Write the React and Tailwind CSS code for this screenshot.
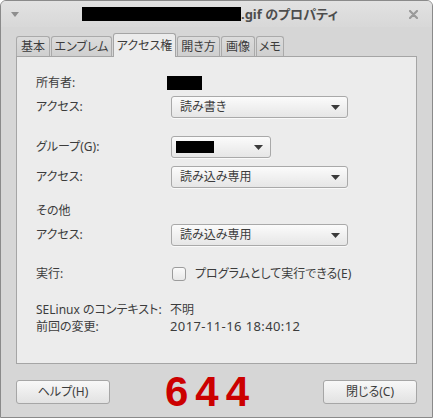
import React from "react";

const tabs = [
  { label: "基本", w: "w-[34px]" },
  { label: "エンブレム", w: "w-[61px]" },
  { label: "アクセス権", w: "w-[63px]", active: true },
  { label: "開き方", w: "w-[43px]" },
  { label: "画像", w: "w-[34px]" },
  { label: "メモ", w: "w-[28px]" },
];

const Caret = () => (
  <svg width="9" height="5" viewBox="0 0 9 5" className="shrink-0">
    <path d="M0 0 L9 0 L4.5 5 Z" fill="#3a3a3a" />
  </svg>
);

const Dropdown = ({ children, wide = true }) => (
  <div
    className={`${wide ? "w-[177px]" : "w-[100px]"} h-[22px] flex items-center justify-between pl-[8px] pr-[7px] rounded-[3px] border border-[#a9a9a9] bg-gradient-to-b from-[#fbfbfb] to-[#e6e6e6] shadow-[0_1px_0_rgba(255,255,255,0.7)] text-[12px] text-[#3c3c3c] whitespace-nowrap`}
  >
    {children}
    <Caret />
  </div>
);

const Row = ({ label, children, className = "" }) => (
  <div className={`flex items-center ${className}`}>
    <div className="w-[135px] shrink-0 text-[12px] text-[#3c3c3c] whitespace-nowrap">{label}</div>
    <div className="flex items-center whitespace-nowrap">{children}</div>
  </div>
);

const App = () => {
  return (
    <div className="w-[433px] h-[419px] bg-white font-['Noto_Sans','Noto_Sans_CJK_JP',sans-serif] [font-feature-settings:'palt']">
      <div className="w-[433px] h-[418px] flex flex-col bg-[#d6d6d6] border border-[#8a8a8a] rounded-t-[6px] overflow-hidden">
        {/* title bar */}
        <div className="h-[26px] shrink-0 flex items-center bg-gradient-to-b from-[#e2e2e2] to-[#d8d8d8] px-[10px]">
          <svg width="8" height="5" viewBox="0 0 8 5">
            <path d="M0 0 L8 0 L4 5 Z" fill="#8e8e8e" />
          </svg>
          <div className="flex-1 flex items-center pl-[63px]">
            <div className="w-[159px] h-[14px] bg-black" />
            <span className="text-[13px] font-bold text-[#4d4d4d] leading-none whitespace-nowrap">.gif のプロパティ</span>
          </div>
          <svg width="9" height="9" viewBox="0 0 9 9" className="mr-[4px]">
            <path d="M1 1 L8 8 M8 1 L1 8" stroke="#9a9a9a" strokeWidth="2.2" strokeLinecap="round" />
          </svg>
        </div>

        {/* tabs */}
        <div className="flex items-end gap-[1px] pl-[15px] mt-[6px] h-[23px] shrink-0">
          {tabs.map((t) =>
            t.active ? (
              <div
                key={t.label}
                className={`${t.w} h-[24px] -mb-[1px] z-10 flex items-center justify-center rounded-t-[3px] border border-b-0 border-[#a5a5a5] bg-[#ececec] text-[12px] text-[#3c3c3c] whitespace-nowrap`}
              >
                {t.label}
              </div>
            ) : (
              <div
                key={t.label}
                className={`${t.w} h-[20px] flex items-center justify-center rounded-t-[3px] border border-b-0 border-[#aaaaaa] bg-gradient-to-b from-[#dcdcdc] to-[#cfcfcf] text-[12px] text-[#3c3c3c] whitespace-nowrap`}
              >
                {t.label}
              </div>
            )
          )}
        </div>

        {/* panel */}
        <div className="mx-[15px] h-[308px] shrink-0 border border-[#a5a5a5] bg-[#ececec] pl-[19px] pt-[18px]">
          <Row label="所有者:" className="h-[16px]">
            <div className="w-[35px] h-[14px] bg-black -ml-[4px]" />
          </Row>
          <Row label="アクセス:" className="h-[22px] mt-[5px]">
            <Dropdown>読み書き</Dropdown>
          </Row>
          <Row label="グループ(G):" className="h-[22px] mt-[18px]">
            <Dropdown wide={false}>
              <div className="w-[38px] h-[12px] bg-black -ml-[4px]" />
            </Dropdown>
          </Row>
          <Row label="アクセス:" className="h-[22px] mt-[8px]">
            <Dropdown>読み込み専用</Dropdown>
          </Row>
          <div className="h-[16px] mt-[15px] flex items-center text-[12px] text-[#3c3c3c]">その他</div>
          <Row label="アクセス:" className="h-[22px] mt-[5px]">
            <Dropdown>読み込み専用</Dropdown>
          </Row>
          <Row label="実行:" className="h-[20px] mt-[18px]">
            <div className="w-[14px] h-[14px] ml-[1px] rounded-[3px] border border-[#9c9c9c] bg-gradient-to-b from-[#fafafa] to-[#e8e8e8]" />
            <span className="ml-[9px] text-[12px] text-[#3c3c3c]">プログラムとして実行できる(E)</span>
          </Row>
          <Row label="SELinux のコンテキスト:" className="h-[16px] mt-[18px]">
            <span className="-ml-[1px] text-[12px] text-[#3c3c3c]">不明</span>
          </Row>
          <Row label="前回の変更:" className="h-[16px] mt-[1px]">
            <span className="-ml-[1px] text-[13px] tracking-[0.4px] text-[#3c3c3c]">2017-11-16 18:40:12</span>
          </Row>
        </div>

        {/* footer */}
        <div className="flex items-start px-[15px] mt-[16px] h-[24px]">
          <div className="w-[94px] h-[24px] flex items-center justify-center rounded-[3px] border border-[#a6a6a6] bg-gradient-to-b from-[#f8f8f8] to-[#e2e2e2] text-[12px] text-[#3c3c3c] whitespace-nowrap">
            ヘルプ(H)
          </div>
          <div className="ml-[55px] -mt-[9px] font-['Liberation_Sans',Arial,sans-serif] text-[42px] leading-none font-bold text-[#cc0000] tracking-[7px]">
            644
          </div>
          <div className="flex-1" />
          <div className="w-[94px] h-[24px] flex items-center justify-center rounded-[3px] border border-[#a6a6a6] bg-gradient-to-b from-[#f8f8f8] to-[#e2e2e2] text-[12px] text-[#3c3c3c] whitespace-nowrap">
            閉じる(C)
          </div>
        </div>
      </div>
    </div>
  );
};

export default App;
